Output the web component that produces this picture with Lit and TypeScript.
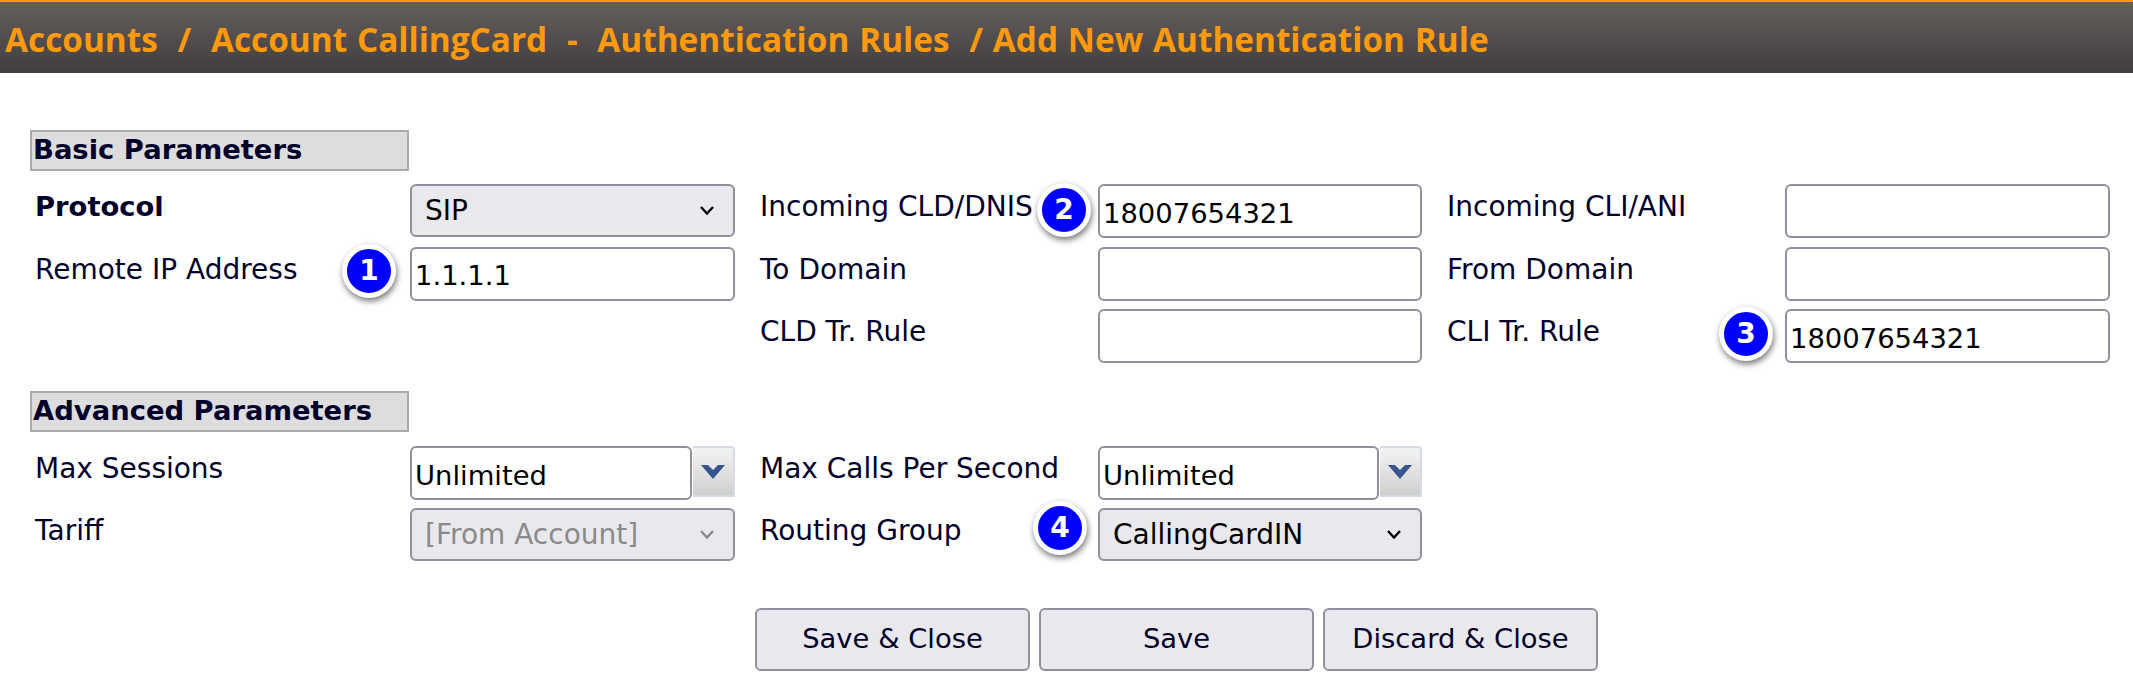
import { LitElement, html, css, nothing } from "lit";
import { customElement } from "lit/decorators.js";

type Field = {
  label: string;
  kind: "input" | "select" | "combo" | "none";
  value?: string;
  bold?: boolean;
  disabled?: boolean;
  badge?: number;
};

const basic: Field[] = [
  { label: "Protocol", kind: "select", value: "SIP", bold: true },
  { label: "Incoming CLD/DNIS", kind: "input", value: "18007654321", badge: 2 },
  { label: "Incoming CLI/ANI", kind: "input" },
  { label: "Remote IP Address", kind: "input", value: "1.1.1.1", badge: 1 },
  { label: "To Domain", kind: "input" },
  { label: "From Domain", kind: "input" },
  { label: "", kind: "none" },
  { label: "CLD Tr. Rule", kind: "input" },
  { label: "CLI Tr. Rule", kind: "input", value: "18007654321", badge: 3 },
];

const advanced: Field[] = [
  { label: "Max Sessions", kind: "combo", value: "Unlimited" },
  { label: "Max Calls Per Second", kind: "combo", value: "Unlimited" },
  { label: "", kind: "none" },
  { label: "Tariff", kind: "select", value: "[From Account]", disabled: true },
  { label: "Routing Group", kind: "select", value: "CallingCardIN", badge: 4 },
  { label: "", kind: "none" },
];

@customElement("app-root")
export class AppRoot extends LitElement {
  static styles = css`
    :host {
      display: block;
      width: 2133px;
      height: 694px;
      overflow: hidden;
      background: #fff;
      font-family: "DejaVu Sans", sans-serif;
      font-size: 27.4px;
      color: #00002a;
    }
    .title {
      box-sizing: border-box;
      height: 73px;
      border-top: 2px solid #ff9900;
      background: linear-gradient(#645e5d, #423e3d);
      color: #ff9a0e;
      font-family: "Open Sans", sans-serif;
      font-weight: 700;
      font-size: 33.35px;
      word-spacing: 1.2px;
      line-height: 74px;
      padding-left: 5px;
      white-space: pre;
    }
    main {
      padding: 57px 0 0 30px;
    }
    h2 {
      box-sizing: border-box;
      width: 379px;
      height: 41px;
      margin: 0;
      border: 2px solid #aaa;
      background: #ddd;
      padding-left: 1px;
      font-size: 27.4px;
      font-weight: 700;
      line-height: 36px;
    }
    .grid {
      display: grid;
      grid-template-columns: 350px 325px 313px 324px 313px 325px;
      column-gap: 25px;
      margin-left: 5px;
    }
    .grid.basic {
      grid-auto-rows: 53.5px;
      row-gap: 9px;
      margin-top: 13px;
      margin-bottom: 28px;
    }
    .grid.advanced {
      grid-auto-rows: 54px;
      row-gap: 8px;
      margin-top: 14px;
      margin-bottom: 46px;
    }
    .label {
      padding-top: 1px;
      font-size: 28px;
      line-height: 44px;
      white-space: nowrap;
    }
    .label.bold {
      font-size: 27.4px;
      font-weight: 700;
    }
    .control {
      position: relative;
      min-width: 0;
    }
    input,
    .select,
    button {
      box-sizing: border-box;
      font: inherit;
      color: inherit;
      border: 2px solid #8f8f9d;
      border-radius: 6px;
    }
    input {
      display: block;
      width: 100%;
      height: 54px;
      background: #fff;
      padding: 4px 3px 0;
      color: #000;
      outline: none;
    }
    .select {
      display: flex;
      align-items: center;
      justify-content: space-between;
      height: 53px;
      background: #e9e9ed;
      padding: 0 18px 0 13px;
      color: #000;
      font-size: 28px;
    }
    .select svg {
      display: block;
      stroke: #000;
    }
    .select.disabled {
      color: #8a8a8a;
    }
    .select.disabled svg {
      stroke: #8a8a8a;
    }
    .combo {
      display: flex;
      align-items: flex-start;
    }
    .combo input {
      flex: 1;
      width: 0;
      padding-top: 6px;
    }
    .spin {
      box-sizing: border-box;
      display: flex;
      align-items: center;
      justify-content: center;
      width: 42px;
      height: 51px;
      margin-left: 1px;
      border: 2px solid #d5dce8;
      border-left: 0;
      border-radius: 0 4px 0 0;
      background: linear-gradient(#f4f4f4, #cfcfcf);
    }
    .badge {
      box-sizing: border-box;
      position: absolute;
      z-index: 1;
      width: 54px;
      height: 54px;
      border: 5px solid #fff;
      border-radius: 50%;
      background: #0000ff;
      box-shadow: 1px 3px 6px rgba(0, 0, 0, 0.55);
      color: #fff;
      font-weight: 700;
      font-size: 28px;
      line-height: 43px;
      text-align: center;
    }
    .b1 {
      left: -68px;
      top: -3px;
    }
    .b2 {
      left: -61px;
      top: -1px;
    }
    .b3 {
      left: -66px;
      top: -2px;
    }
    .b4 {
      left: -65px;
      top: -7px;
    }
    .actions {
      display: flex;
      gap: 9px;
      padding-left: 725px;
    }
    button {
      width: 275px;
      height: 63px;
      background: #e9e9ed;
      padding: 0 0 2px;
      color: #00002a;
    }
  `;

  private chevron() {
    return html`<svg width="16" height="11" viewBox="0 0 16 11" fill="none" stroke-width="2.4">
      <path d="M2 2l6 6.5L14 2" />
    </svg>`;
  }

  private control(f: Field) {
    if (f.kind === "select") {
      return html`<div class="select ${f.disabled ? "disabled" : ""}">
        <span>${f.value}</span>${this.chevron()}
      </div>`;
    }
    if (f.kind === "combo") {
      return html`<div class="combo">
        <input .value=${f.value ?? ""} />
        <div class="spin">
          <svg width="26" height="17" viewBox="0 0 26 17">
            <path d="M1 2h7l5 5 5-5h7L13 16z" fill="#36558f" />
          </svg>
        </div>
      </div>`;
    }
    return html`<input .value=${f.value ?? ""} />`;
  }

  private rows(fields: Field[]) {
    return fields.map(
      (f) => html`
        <div class="label ${f.bold ? "bold" : ""}">${f.label}</div>
        <div class="control">
          ${f.badge ? html`<div class="badge b${f.badge}">${f.badge}</div>` : nothing}
          ${f.kind === "none" ? nothing : this.control(f)}
        </div>
      `
    );
  }

  render() {
    return html`
      <div class="title">Accounts  /  Account CallingCard  -  Authentication Rules  / Add New Authentication Rule</div>
      <main>
        <h2>Basic Parameters</h2>
        <div class="grid basic">${this.rows(basic)}</div>
        <h2>Advanced Parameters</h2>
        <div class="grid advanced">${this.rows(advanced)}</div>
        <div class="actions">
          <button>Save &amp; Close</button>
          <button>Save</button>
          <button>Discard &amp; Close</button>
        </div>
      </main>
    `;
  }
}
